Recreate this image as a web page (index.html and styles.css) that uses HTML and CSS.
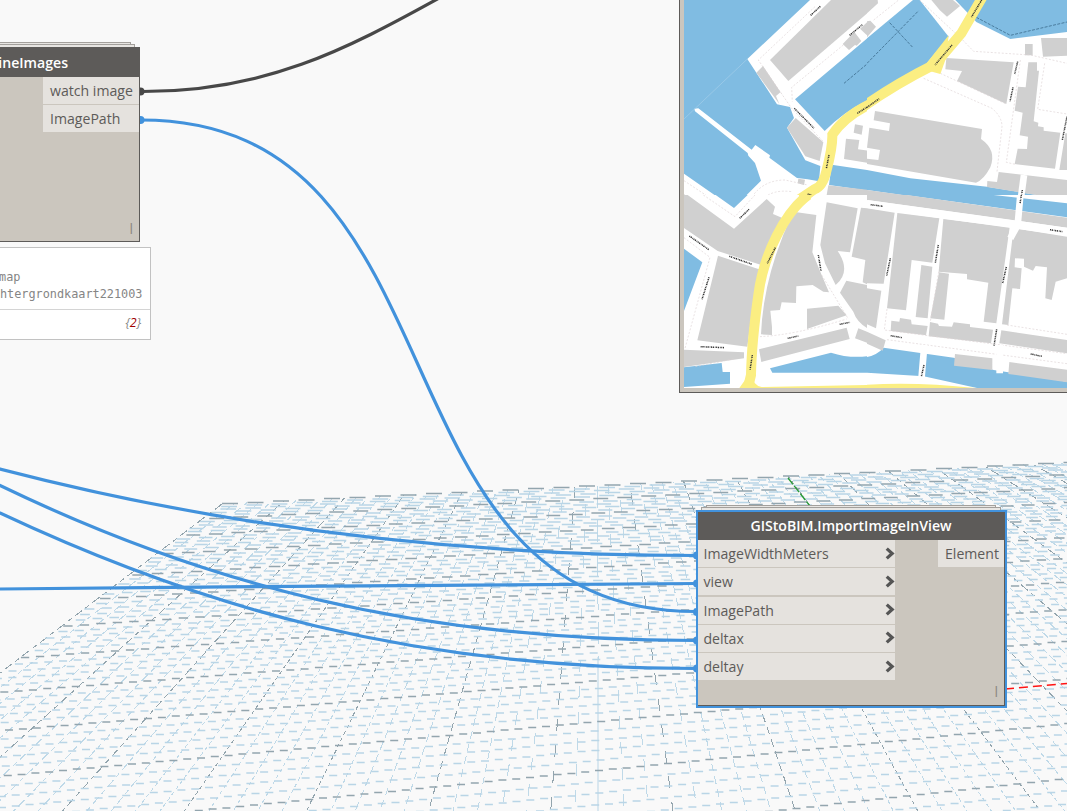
FILE: index.html
```html
<!DOCTYPE html>
<html lang="en">
<head>
<meta charset="utf-8">
<title>Graph workspace</title>
<link rel="stylesheet" href="styles.css">
</head>
<body>
<main class="workspace">
  <svg class="layer" id="grid" viewBox="0 0 1067 811"></svg>

  <section class="node node-map">
    <svg class="map" viewBox="9 0 383 388" width="383" height="388">
      <rect x="0" width="400" height="400" fill="#fff"/>
      <svg x="0" y="0" width="192" height="195" viewBox="0 0 576 585">
        <g class="water">
          <path d="M0 0H405L217 177L244 218L306 313L345 321L357 354L336 383L391 481L436 498L432 544L398 538L366 534L283 473L285 466L241 435L230 449L70 325L58 326L60 334L218 459L220 467L240 489L258 542L200 600H140L0 502Z"/>
          <path d="M360 298L600 95V290Q510 330 449 393Z"/>
          <path d="M470 494L600 514V575L462 555Z"/>
        </g>
        <g class="block">
          <path d="M468 0H600V20L340 243L285 180Z"/>
          <path d="M244 218L264 198L327 292L317 276L303 288L313 312Z"/>
          <path d="M503 132L538 96L559 123L545 137L540 135L522 150ZM555 86L582 61L600 80L575 105Z"/>
          <path d="M336 383L362 354L445 427L434 483L391 469Z"/>
          <path d="M540 373L564 377L560 404L536 398ZM513 416L553 420L549 448L600 455V492L507 477ZM583 384L600 386V447L576 442Z"/>
          <path d="M370 536L390 539L387 555L368 550ZM460 556L600 572V600L455 585ZM27 583L60 600H27Z"/>
        </g>
        <g class="trace">
          <path d="M420 20L250 180L350 325L445 425M505 135L350 262L352 305M27 542L110 597M225 600Q260 540 330 540L398 555M262 600Q290 567 350 575"/>
        </g>
        <path class="thin" d="M27 357L217 177"/>
        <path class="pier" d="M507 250L600 172"/>
        <path class="road" d="M600 305Q510 345 472 404Q473 440 455 510Q444 560 418 568L370 600"/>
        <g class="label"><path d="M407 46L436 19M524 106L562 74M358 325L417 385M547 340L600 306M462 465L454 506M398 582L440 597"/></g>
      </svg>
      <svg x="192" y="0" width="200" height="195" viewBox="0 0 600 585">
        <g class="water">
          <path d="M0 115L138 0H158L245 110L165 207L0 298Z"/>
          <path d="M265 0H600V96L430 117L328 66Z"/>
          <path d="M0 510L130 535L360 560L600 600H210L0 570Z"/>
        </g>
        <g class="block">
          <path d="M0 0H32L33 10L0 40ZM0 64L10 62L27 80L0 112ZM193 0H258L279 18L240 50L218 30Z"/>
          <path d="M238 174L440 187L418 312L270 243L285 213L235 208Z"/>
          <path d="M474 132H497V166H474ZM522 114H600V167L528 170Z"/>
          <path d="M484 187H510V212H516L500 364L514 368L513 379L530 382V392L580 398L564 506L443 492L452 446L480 447L483 410L458 406L467 338L443 332L453 260L476 262Z"/>
          <path d="M24 333L345 387L342 417Q390 450 370 502Q350 540 327 548L0 492V476L34 480L39 450L0 443L7 383L66 393L69 370L20 361Z"/>
          <path d="M395 516L600 540V600L360 561L361 543L390 546ZM0 570L220 600H0ZM595 400H600V510H577Z"/>
        </g>
        <g class="trace"><path d="M20 60L95 0M158 0L285 118L320 154L490 165L600 190M170 235L375 325Q405 350 405 380L390 515M220 220L418 312M460 180L418 487L445 493M533 190L512 328L600 342"/></g>
        <path class="pier" d="M0 190L155 32M68 68L138 143M328 52L430 106L600 66"/>
        <path class="bridge" d="M471 525L461 600"/>
        <path class="road" d="M347 -10L283 100L205 192Q80 255 -12 321"/>
        <path class="road-fill" d="M245 106L165 207L220 222L237 175Z"/>
        <g class="label"><path d="M344 0L313 52M255 135L204 195M452 185L443 222M438 262L429 304M0 322L38 295M600 350L586 420M466 570L461 600"/></g>
      </svg>
      <svg x="0" y="195" width="192" height="193" viewBox="0 0 576 579">
        <g class="water">
          <path d="M122 0H218L177 39ZM27 161L82 202L27 348ZM27 517L140 504L143 531H165V566L27 576ZM285 520L468 473Q520 490 576 484V533H292Z"/>
        </g>
        <g class="block">
          <path d="M27 0H38L177 101L275 12L300 35L294 57L324 70Q280 140 259 210L128 168L27 99Z"/>
          <path d="M129 182L259 225Q230 340 217 455L67 436ZM27 464L207 472V490L27 516Z"/>
          <path d="M355 50L424 60L412 172L440 240L462 292L445 290L413 270L364 274L363 324L320 322L315 345L286 347L291 396V420L258 418Q265 240 355 50Z"/>
          <path d="M455 22L548 40L525 172L488 168Q530 230 482 270L450 205L436 150ZM558 38L576 40V268L563 262L571 195L530 185Z"/>
          <path d="M514 257L576 270V399Q545 380 535 350L495 293ZM396 341L490 332L515 361L396 402ZM252 463L515 398L524 432L259 501ZM550 400L576 410V443L540 430Z"/>
        </g>
        <g class="trace"><path d="M85 0L180 65L240 0M27 128L105 187L30 460M255 425Q360 420 515 372M440 240L520 372M175 492L60 515M245 470L230 560"/></g>
        <path class="road" d="M400 0C330 50 265 180 250 300Q230 440 228 540L215 595"/>
        <path class="road-fill" d="M215 548L193 579H576V570L260 576Q232 570 232 540ZM372 0L430 -8L400 15L370 45Z"/>
        <g class="label"><path d="M194 70L222 43M43 123L103 165M163 184L232 208M301 158L277 205M102 247L81 313M77 455L147 458M232 480L225 525M338 430L370 423M494 388L525 382M430 180L438 228"/></g>
      </svg>
      <svg x="192" y="195" width="200" height="193" viewBox="0 0 600 579">
        <g class="water">
          <path d="M115 0H380L600 25V67ZM0 486Q30 480 50 458L260 488L380 525L600 560V579H330L170 544L0 533Z"/>
        </g>
        <g class="block">
          <path d="M0 0H120L600 68V98L0 15Z"/>
          <path d="M0 40L83 53L50 266L0 265ZM0 280L43 287L27 400L0 388ZM91 54L217 70L196 203L134 195L117 346L60 340ZM163 210L196 215L182 370L146 366Z"/>
          <path d="M229 72L428 97L388 385L350 380L364 263L300 253V237L215 230ZM216 232L246 236L232 374L190 370Z"/>
          <path d="M440 99L600 125V250L566 260L554 315L535 310L540 217L506 213L498 227L471 215V191L444 190L443 217L464 220L459 282L436 280L424 390L405 388Z"/>
          <path d="M73 377L97 380L99 369L132 374L134 388L182 393L177 421L71 408ZM189 381L213 386L216 393L255 395L260 382L309 388V396L378 404L372 445L185 424ZM403 406L600 435V475L397 445Z"/>
          <path d="M0 410L56 436L47 467L0 446ZM264 477L376 490V525L261 512ZM427 501L600 524V562L424 537Z"/>
        </g>
        <g class="trace"><path d="M60 342L52 405L380 447L600 476M60 434L600 506M420 390L600 418M215 230L190 380"/></g>
        <path class="bridge" d="M460 0L452 90L430 130M172 450L161 579M398 450V535"/>
        <path class="bridge wide" d="M0 27L600 110"/>
        <path class="road-fill" d="M0 569Q150 560 325 579H0Z"/>
        <g class="label"><path d="M463 0L459 26M11 29L48 34M549 104L586 110M70 190L59 242M214 150L205 203M418 216L407 264M389 403L381 452M71 422L105 428M491 477L525 484M171 510L163 545"/></g>
      </svg>
    </svg>
  </section>

  <div class="ghost ghost-l2"></div><div class="ghost ghost-l1"></div>
  <div class="ghost ghost-r2"></div><div class="ghost ghost-r1"></div>

  <svg class="layer wires" viewBox="0 0 1067 811">
    <path class="dark" d="M141 91.500C265 92 345 50 441 -3"/>
    <path d="M141 120C474 120 363 611.5 696 611.5"/>
    <path d="M-2 468.500L0 469C200 521 430 555.500 696 555.500"/>
    <path d="M-2 484.500L0 485.500C200 582 410 640.500 696 640.500"/>
    <path d="M-2 512L0 513C200 607 410 668.500 696 668.500"/>
    <path d="M-2 589C230 587 460 583.500 696 583.500"/>
    <circle class="dark-dot" cx="140.500" cy="91.500" r="4"/>
    <circle cx="140.500" cy="120" r="4"/>
    <circle cx="697" cy="555.500" r="4"/><circle cx="697" cy="583.500" r="4"/>
    <circle cx="697" cy="612" r="4"/><circle cx="697" cy="640.500" r="4"/><circle cx="697" cy="668.500" r="4"/>
  </svg>

  <section class="node node-images">
    <h2 class="node-title">ineImages</h2>
    <div class="node-body">
      <ul class="ports outputs">
        <li class="port">watch image</li>
        <li class="port">ImagePath</li>
      </ul>
    </div>
    <span class="lacing">l</span>
  </section>

  <aside class="preview">
    <div class="preview-list"><div>map</div><div>htergrondkaart221003</div></div>
    <div class="preview-count">{<b>2</b>}</div>
  </aside>

  <section class="node node-import">
    <h2 class="node-title">GIStoBIM.ImportImageInView</h2>
    <div class="node-body">
      <ul class="ports inputs">
        <li class="port">ImageWidthMeters<svg class="chev" viewBox="0 0 9 12"><path d="M1.500 1.500L6.500 6L1.500 10.500"/></svg></li>
        <li class="port">view<svg class="chev" viewBox="0 0 9 12"><path d="M1.500 1.500L6.500 6L1.500 10.500"/></svg></li>
        <li class="port">ImagePath<svg class="chev" viewBox="0 0 9 12"><path d="M1.500 1.500L6.500 6L1.500 10.500"/></svg></li>
        <li class="port">deltax<svg class="chev" viewBox="0 0 9 12"><path d="M1.500 1.500L6.500 6L1.500 10.500"/></svg></li>
        <li class="port">deltay<svg class="chev" viewBox="0 0 9 12"><path d="M1.500 1.500L6.500 6L1.500 10.500"/></svg></li>
      </ul>
      <ul class="ports outputs"><li class="port">Element</li></ul>
    </div>
    <span class="lacing">l</span>
  </section>
</main>
<script src="grid.js"></script>
</body>
</html>
```
FILE: styles.css
```css
* { box-sizing: border-box; }

body {
  margin: 0;
  background: #f9f9f9;
  font-family: "Open Sans", "Noto Sans", sans-serif;
}

.workspace {
  position: relative;
  width: 1067px;
  height: 811px;
  overflow: hidden;
}

.layer {
  position: absolute;
  inset: 0;
  width: 1067px;
  height: 811px;
}

/* ground grid */
.minor, .major, .axis { fill: none; stroke-width: 1; }
.minor { stroke: #b9d5e6; }
.major { stroke: #93a5ae; }
.minor.col { stroke: #bfd9e8; }
.row { stroke-width: 1.3; }
.col { shape-rendering: crispEdges; }
.axis-x { stroke: #ff1414; stroke-width: 1.6; }
.axis-y { stroke: #279a32; stroke-width: 1.3; }

/* connectors */
.wires path { fill: none; stroke: #4292dc; stroke-width: 3.2; }
.wires circle { fill: #4292dc; }
.wires .dark { stroke: #484848; }
.wires .dark-dot { fill: #484848; }

/* nodes */
.node {
  position: absolute;
  background: #cbc6be;
  border: 1px solid #5d5b59;
}

.node-title {
  margin: 0;
  height: 29px;
  background: #5d5b59;
  color: #fff;
  font-size: 14.1px;
  font-weight: 600;
  line-height: 30px;
  text-align: center;
  white-space: nowrap;
}

.node-body { display: flex; justify-content: space-between; }

.ports {
  display: flex;
  flex-direction: column;
  gap: 1.3px;
  margin: 0;
  padding: 0;
  list-style: none;
}

.port {
  display: flex;
  align-items: center;
  justify-content: space-between;
  height: 27px;
  padding: 0 7px 0 5.5px;
  background: #e5e2de;
  color: #5d5b59;
  font-size: 14.1px;
  line-height: 27px;
  white-space: nowrap;
}

.chev { width: 10px; height: 13px; margin-top: -1px; }
.chev path { fill: none; stroke: #555; stroke-width: 3; }

.lacing {
  position: absolute;
  right: 6px;
  bottom: 3px;
  color: #8b8680;
  font-size: 14px;
  line-height: 18px;
}

.node-images { left: -160px; top: 47px; width: 300px; height: 195px; }
.node-images .node-title { padding-right: 71px; text-align: right; }
.node-images .node-body { justify-content: flex-end; }
.node-images .outputs { width: 96px; }
.node-images .port { padding-left: 7px; padding-right: 0; }

.node-import {
  left: 698px;
  top: 512px;
  width: 307px;
  height: 194px;
  border-width: 0 1px 1px 0;
  outline: 2px solid #4292dc;
}
.node-import .node-title { height: 28px; line-height: 28px; }
.node-import .inputs { width: 197px; }
.node-import .inputs .port { padding-right: 0; }
.node-import .outputs { width: 66px; }
.node-import .outputs .port { padding: 0 0 0 7px; }
.node-import .lacing { right: 6px; bottom: 4px; }

.node-map {
  left: 679px;
  top: -10px;
  width: 400px;
  height: 403px;
  padding: 9px 0 0 4px;
}
.map { display: block; }

/* outlines behind a custom node */
.ghost { position: absolute; height: 10px; border: 1px solid #a3a09c; background: #e8e6e3; }
.ghost-l2 { left: -60px; top: 42px; width: 191px; }
.ghost-l1 { left: -60px; top: 44px; width: 195px; }
.ghost-r2 { left: 706px; top: 505px; width: 290px; }
.ghost-r1 { left: 701px; top: 507px; width: 300px; }

/* output preview */
.preview {
  position: absolute;
  left: -120px;
  top: 247px;
  width: 271px;
  height: 93px;
  background: #fff;
  border: 1px solid #c2c2c2;
}
.preview-list {
  display: flex;
  flex-direction: column;
  height: 62px;
  padding: 21px 7.5px 0 0;
  border-bottom: 1px solid #d4d4d4;
  color: #858585;
  font-family: "DejaVu Sans Mono", "Liberation Mono", monospace;
  font-size: 11.85px;
  line-height: 17px;
  text-align: right;
}
.preview-list div:first-child { padding-right: 122px; }
.preview-count {
  padding-right: 9px;
  color: #8a8a8a;
  font-size: 12.5px;
  font-style: italic;
  line-height: 25px;
  text-align: right;
}
.preview-count b { color: #a00000; font-weight: 400; }

/* map drawing */
.water { fill: #80bce2; }
.block { fill: #d0d0d0; }
.road { fill: none; stroke: #fbee82; stroke-width: 30; }
.road-fill { fill: #fbee82; }
.bridge { fill: none; stroke: #fff; stroke-width: 20; }
.bridge.wide { stroke-width: 24; }
.trace { fill: none; stroke: #ded3d5; stroke-width: 2; stroke-dasharray: 6 5; }
.thin { fill: none; stroke: #a5cfea; stroke-width: 2; }
.pier { fill: none; stroke: #3f6f8f; stroke-width: 2.5; stroke-dasharray: 9 4; }
.label { fill: none; stroke: #333; stroke-width: 4.5; stroke-dasharray: 3 2 4 2.500 2 2; }
```
FILE: grid.js
```javascript
// Ground plane in two-point perspective: u counts major columns, v major rows.
const NS = 'http://www.w3.org/2000/svg';
const grid = document.getElementById('grid');
const A = 0.01046, B = 0.0502;
const project = (u, v) => {
  const w = 1 + u * A - v * B;
  return [(222 + u * A * 6200 - v * B * 595) / w, (504 + u * A * 211 - v * B * 220) / w];
};
const line = (a, b, cls, dash, offset) => {
  const el = document.createElementNS(NS, 'path');
  el.setAttribute('d', `M${a[0].toFixed(2)} ${a[1].toFixed(2)}L${b[0].toFixed(2)} ${b[1].toFixed(2)}`);
  el.setAttribute('class', cls);
  if (dash) el.setAttribute('stroke-dasharray', dash);
  if (offset) el.setAttribute('stroke-dashoffset', offset);
  grid.appendChild(el);
};
// columns
for (let i = 0; i <= 150; i++) {
  const kind = i % 5 ? 'minor' : 'major';
  const slope = Math.abs(i / 5 - 6.4);
  if (i === 32) {
    line(project(6.4, 0), project(6.4, 8.4), 'minor col', '22 12');
    line([598, 657], [598, 811], 'minor', '');
    continue;
  }
  const dash = slope < 1 ? '12 14' : slope < 2.2 ? '8 5' : slope < 4 ? '4 3' : '9 4 5 4';
  line(project(i / 5, 0), project(i / 5, 15), kind + ' col', dash, (i * 7) % 19);
}
// rows, drawn as short level strokes that step with the slope
for (let j = 0; j <= 75; j++) {
  const v = j / 5;
  const on = Math.max(8, 16 - v * 1.1), pitch = on + Math.max(5.8, 9.5 - v * 0.4);
  const a = project(0, v), b = project(30, v);
  const m = (b[1] - a[1]) / (b[0] - a[0]);
  let d = '';
  for (let x = a[0] + (j * 11) % 8; x < Math.min(b[0], 1080); x += pitch) {
    if (x < -20) continue;
    const y = Math.round((a[1] + m * (x + on / 2 - a[0])) * 2) / 2;
    d += `M${x.toFixed(1)} ${y}h${on.toFixed(1)}`;
  }
  const el = document.createElementNS(NS, 'path');
  el.setAttribute('d', d || 'M0 0');
  el.setAttribute('class', (j % 5 ? 'minor' : 'major') + ' row');
  grid.appendChild(el);
}
line([788, 478], [810, 506], 'axis axis-y', '8 2');
line([1005, 689], [1067, 683.5], 'axis axis-x', '9 5');
```
